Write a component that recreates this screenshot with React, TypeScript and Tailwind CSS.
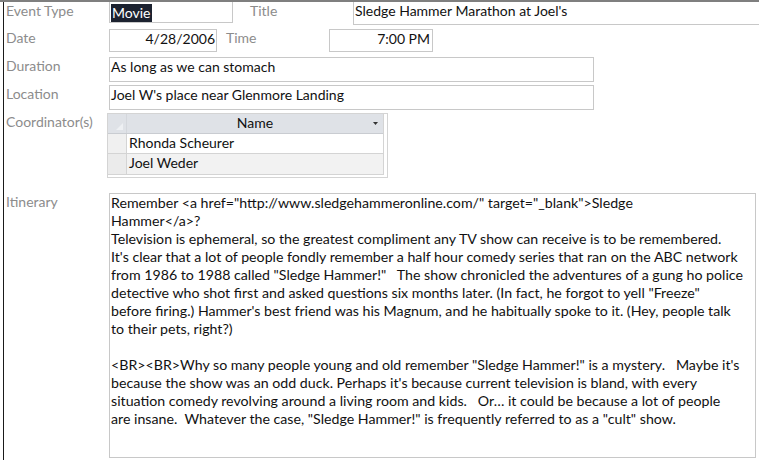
import React from 'react'

const itinerary = [
  'Remember <a href="http://www.sledgehammeronline.com/" target="_blank">Sledge',
  'Hammer</a>?',
  'Television is ephemeral, so the greatest compliment any TV show can receive is to be remembered.',
  "It's clear that a lot of people fondly remember a half hour comedy series that ran on the ABC network",
  'from 1986 to 1988 called "Sledge Hammer!"   The show chronicled the adventures of a gung ho police',
  'detective who shot first and asked questions six months later. (In fact, he forgot to yell "Freeze"',
  "before firing.) Hammer's best friend was his Magnum, and he habitually spoke to it. (Hey, people talk",
  'to their pets, right?)',
  '',
  '<BR><BR>Why so many people young and old remember "Sledge Hammer!" is a mystery.   Maybe it\'s',
  "because the show was an odd duck. Perhaps it's because current television is bland, with every",
  'situation comedy revolving around a living room and kids.   Or… it could be because a lot of people',
  'are insane.  Whatever the case, "Sledge Hammer!" is frequently referred to as a "cult" show.',
]

function Label({ children, className = '' }: { children: React.ReactNode; className?: string }) {
  return <div className={`w-[104px] shrink-0 pl-[1px] text-[#8c8c8c] leading-[18px] ${className}`}>{children}</div>
}

export default function App() {
  return (
    <div className="w-[759px] h-[460px] bg-white overflow-hidden border-t-2 border-[#7f7f7f] font-['Lato',sans-serif] text-[14px] text-[#111]">
      <div className="ml-[3px] h-full border-l border-[#1a1a1a] pl-[1px]">
        {/* row 1 */}
        <div className="flex h-[23px] items-start">
          <Label>Event Type</Label>
          <div className="w-[124px] h-[21px] border-l border-r border-b border-[#c8c8c8] pl-[1px]">
            <span className="bg-[#1c2230] text-white px-[1px] leading-[18px] inline-block">Movie</span>
          </div>
          <Label className="ml-[16px]">Title</Label>
          <div className="flex-1 h-[23px] border-l border-b border-[#c8c8c8] pl-[1px] leading-[18px]">
            Sledge Hammer Marathon at Joel's
          </div>
        </div>

        {/* row 2 */}
        <div className="flex mt-[4px] items-start">
          <Label>Date</Label>
          <div className="w-[108px] h-[23px] border border-[#c8c8c8] pr-[1px] text-right leading-[18px]">4/28/2006</div>
          <Label className="ml-[8px]">Time</Label>
          <div className="w-[104px] h-[23px] border border-[#c8c8c8] pr-[2px] text-right leading-[18px]">7:00 PM</div>
        </div>

        {/* row 3 */}
        <div className="flex mt-[5px] items-start">
          <Label>Duration</Label>
          <div className="w-[485px] h-[25px] border border-[#c8c8c8] pl-[1px] leading-[18px]">As long as we can stomach</div>
        </div>

        {/* row 4 */}
        <div className="flex mt-[3px] items-start">
          <Label>Location</Label>
          <div className="w-[485px] h-[25px] border border-[#c8c8c8] pl-[1px] leading-[18px]">Joel W's place near Glenmore Landing</div>
        </div>

        {/* row 5 - subform */}
        <div className="flex mt-[3px] items-start">
          <Label>Coordinator(s)</Label>
          <div className="-ml-[2px] w-[281px] h-[65px] border border-[#d4d4d4] bg-white">
            <div className="w-[276px] border-r border-b border-[#d4d4d4]">
              <div className="flex h-[20px] bg-[#dfe2e7] border-b border-[#c9ccd1]">
                <div className="w-[19px] shrink-0 border-r border-[#d4d7dc] relative">
                  <svg className="absolute right-[3px] bottom-[3px]" width="7" height="7" viewBox="0 0 7 7">
                    <path d="M7 0 L7 7 L0 7 Z" fill="#eef0f3" />
                  </svg>
                </div>
                <div className="flex-1 relative text-center leading-[18px]">
                  Name
                  <svg className="absolute right-[5px] top-[8px]" width="5" height="3" viewBox="0 0 5 3">
                    <path d="M0 0 L5 0 L2.5 3 Z" fill="#333" />
                  </svg>
                </div>
              </div>
              <div className="flex h-[20px] border-b border-[#d4d4d4]">
                <div className="w-[19px] shrink-0 bg-[#f0f0f0] border-r border-[#d4d4d4]" />
                <div className="flex-1 pl-[2px] leading-[18px] bg-white">Rhonda Scheurer</div>
              </div>
              <div className="flex h-[20px]">
                <div className="w-[19px] shrink-0 bg-[#ebebeb] border-r border-[#d4d4d4]" />
                <div className="flex-1 pl-[2px] leading-[18px] bg-[#f2f2f2]">Joel Weder</div>
              </div>
            </div>
          </div>
        </div>

        {/* row 6 - itinerary */}
        <div className="flex mt-[15px] items-start">
          <Label>Itinerary</Label>
          <div className="w-[647px] h-[265px] border border-[#c8c8c8] pl-[1px] text-[14.2px]">
            {itinerary.map((line, i) => (
              <div key={i} className="whitespace-pre leading-[18px] h-[18px]">{line}</div>
            ))}
          </div>
        </div>
      </div>
    </div>
  )
}
